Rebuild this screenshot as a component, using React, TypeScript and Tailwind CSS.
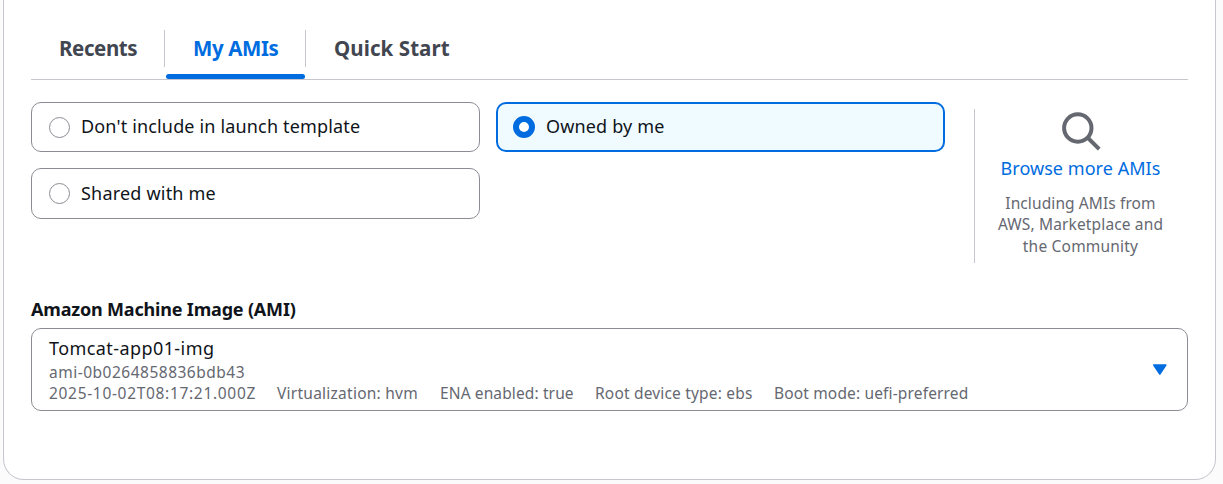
import React from "react";

type Choice = { label: string; selected?: boolean; box: string; text: string };

const choices: Choice[] = [
  { label: "Don't include in launch template", box: "h-[50px]", text: "tracking-[0.16px]" },
  { label: "Owned by me", selected: true, box: "h-[50px]", text: "tracking-[0.15px]" },
  { label: "Shared with me", box: "h-[51px]", text: "tracking-[0.2px]" },
];

const details = [
  { text: "2025-10-02T08:17:21.000Z", cls: "w-[228px] tracking-[0.68px]" },
  { text: "Virtualization: hvm", cls: "w-[163px] tracking-[0.25px]" },
  { text: "ENA enabled: true", cls: "w-[155px] tracking-[0.12px]" },
  { text: "Root device type: ebs", cls: "w-[179px] tracking-[0.18px]" },
  { text: "Boot mode: uefi-preferred", cls: "w-[200px] tracking-[0.15px]" },
];

function Radio({ selected }: { selected?: boolean }) {
  return selected ? (
    <span className="h-[22px] w-[22px] shrink-0 rounded-full border-[6.5px] border-[#006ce0] bg-white" />
  ) : (
    <span className="h-[21px] w-[21px] shrink-0 rounded-full border border-[#8c8c94] bg-white" />
  );
}

function ChoiceCard({ choice }: { choice: Choice }) {
  const look = choice.selected
    ? "border-[2px] border-[#006ce0] bg-[#f0fbff] pl-[15px] gap-[11px]"
    : "border border-[#8c8c94] bg-white pl-[17px] gap-[11px]";
  return (
    <label className={`flex items-center rounded-[10px] ${look} ${choice.box}`}>
      <Radio selected={choice.selected} />
      <span className={`whitespace-nowrap pb-[2px] text-[18px] leading-6 text-[#0f141a] ${choice.text}`}>{choice.label}</span>
    </label>
  );
}

export default function App() {
  return (
    <div className="h-[484px] w-[1223px] overflow-hidden bg-[#fbfbfb] pl-[3px] font-['Noto_Sans',sans-serif]">
      <main className="h-[480px] w-[1213px] rounded-b-[21px] border-x border-b border-[#c6c6cd] bg-white pl-[27px]">
        <nav className="flex h-[80px] w-[1157px] border-b border-[#c6c6cd] pt-[30px] text-[20.5px] font-bold leading-[37px] text-[#424650]">
          <div className="h-[37px] w-[134px] border-r border-[#c6c6cd] pl-[28px]">
            <span className="tracking-[-0.4px]">Recents</span>
          </div>
          <div className="flex h-[49px] w-[140px] flex-col justify-between pl-px text-[#006ce0]">
            <span className="h-[37px] pl-[27px] tracking-[-0.4px]">My AMIs</span>
            <span className="h-[5px] w-[139px] rounded-full bg-[#006ce0]" />
          </div>
          <div className="h-[37px] border-l border-[#c6c6cd] pl-[28px]">
            <span className="tracking-[0.08px]">Quick Start</span>
          </div>
        </nav>

        <section className="flex pt-[22px]">
          <div className="grid h-[117px] w-[914px] grid-cols-2 gap-4">
            {choices.map((c) => (
              <ChoiceCard key={c.label} choice={c} />
            ))}
          </div>
          <aside className="ml-[29px] mt-[7px] flex h-[154px] w-[212px] flex-col items-center border-l border-[#c6c6cd] pt-[2px] text-center">
            <svg className="h-[42px] w-[42px]" viewBox="0 0 42 42" fill="none" stroke="#656871" strokeWidth="4">
              <circle cx="17.8" cy="17" r="13.7" />
              <path d="M27.5 26.5 L39.2 38.2" />
            </svg>
            <a className="mt-[3px] text-[18px] leading-6 tracking-[0.05px] text-[#006ce0]">Browse more AMIs</a>
            <p className="mt-[13px] whitespace-nowrap text-[15.5px] text-[#656871]">
              <span className="block h-[21px] leading-[21.5px] tracking-[0.1px]">Including AMIs from</span>
              <span className="block h-[22px] leading-[21px] tracking-[0.14px]">AWS, Marketplace and</span>
              <span className="block h-[21px] leading-[21px] tracking-[0.2px]">the Community</span>
            </p>
          </aside>
        </section>

        <section className="pt-[34px]">
          <h3 className="h-[31px] text-[18px] font-bold leading-6 text-[#0f141a]">
            <span className="tracking-[-0.18px]">Amazon Machine Image (AMI)</span>
          </h3>
          <div className="flex h-[83px] w-[1157px] items-center justify-between rounded-[10px] border border-[#8c8c94] pl-[17px] pr-[20px]">
            <div className="h-[75px] whitespace-nowrap text-[15.5px] leading-[21px] text-[#656871]">
              <div className="h-[29px] text-[18px] leading-[33px] tracking-[0.42px] text-[#0f141a]">Tomcat-app01-img</div>
              <div className="h-[21px] pt-px tracking-[0.5px]">ami-0b0264858836bdb43</div>
              <div className="flex pt-px">
                {details.map((d) => (
                  <span key={d.text} className={d.cls}>{d.text}</span>
                ))}
              </div>
            </div>
            <svg className="h-[12px] w-[15px]" viewBox="0 0 15 12">
              <path d="M1.8 1 H13.8 L7.8 10 Z" fill="#006ce0" stroke="#006ce0" strokeWidth="1.6" strokeLinejoin="round" />
            </svg>
          </div>
        </section>
      </main>
    </div>
  );
}
